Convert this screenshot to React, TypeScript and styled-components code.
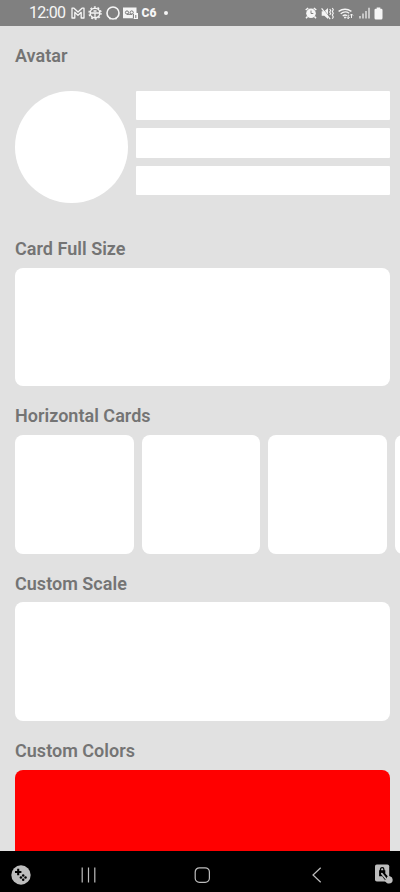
import React from 'react';
import styled, { createGlobalStyle } from 'styled-components';

const GlobalStyle = createGlobalStyle`
  * { box-sizing: border-box; }
  body { margin: 0; background: #e1e1e1; font-family: Roboto, sans-serif; }
`;

const Screen = styled.div`
  width: 400px;
  height: 892px;
  display: flex;
  flex-direction: column;
  overflow: hidden;
  background: #e1e1e1;
`;

const StatusBar = styled.header`
  flex: 0 0 26px;
  display: flex;
  align-items: center;
  justify-content: space-between;
  padding: 0 17px 0 29px;
  background: #808080;
  color: #f5f5f5;
`;

const StatusGroup = styled.div<{ $gap: number }>`
  display: flex;
  align-items: center;
  gap: ${({ $gap }) => $gap}px;
  height: 26px;
`;

const Clock = styled.span`
  width: 38px;
  font-size: 16px;
  line-height: 26px;
  letter-spacing: -0.7px;
  white-space: nowrap;
`;

const Icon = styled.svg`
  display: block;
  flex: none;
  overflow: visible;
`;

const Content = styled.main`
  flex: 1;
  min-height: 0;
  overflow: hidden;
  padding: 19px 0 0 15px;
`;

const Section = styled.section<{ $height: number }>`
  height: ${({ $height }) => $height}px;
`;

const Title = styled.h2<{ $space: number }>`
  margin: 0 0 ${({ $space }) => $space}px;
  height: 22px;
  font-size: 18px;
  font-weight: 600;
  line-height: 22px;
  letter-spacing: 0.02px;
  color: #747474;
`;

const AvatarRow = styled.div`
  display: flex;
  gap: 8px;
  width: 375.4px;
`;

const AvatarCircle = styled.div`
  width: 112.7px;
  height: 112.7px;
  border-radius: 50%;
  background: #fff;
`;

const Lines = styled.div`
  flex: 1;
  display: flex;
  flex-direction: column;
  gap: 8px;
`;

const Line = styled.div`
  height: 29.5px;
  border-radius: 1px;
  background: #fff;
`;

const Card = styled.div<{ $color?: string; $width?: number }>`
  flex: none;
  width: ${({ $width = 375.4 }) => $width}px;
  height: 118.7px;
  border-radius: 8px;
  background: ${({ $color = '#fff' }) => $color};
`;

const CardRow = styled.div`
  display: flex;
  gap: 7.9px;
  overflow: hidden;
`;

const NavBar = styled.nav`
  flex: 0 0 41px;
  display: grid;
  grid-template-columns: 67px 111px 121px 74px 27px;
  align-items: center;
  padding-top: 6px;
  background: #000;
  color: #bdbdbd;
`;

const NavItem = styled.div<{ $inset: number }>`
  padding-left: ${({ $inset }) => $inset}px;
`;

const MailIcon = () => (
  <Icon width="14" height="12" viewBox="0 0 14 12" fill="none" stroke="currentColor" strokeWidth="1.3" strokeLinejoin="round">
    <path d="M1 11V1.2h2L7 5l4-3.8h2V11h-2.8V5.3L7 8.4 3.8 5.3V11Z" />
  </Icon>
);

const GearIcon = () => (
  <Icon width="14" height="14" viewBox="0 0 14 14" fill="none" stroke="currentColor">
    <circle cx="7" cy="7" r="4.8" strokeWidth="1.4" />
    <circle cx="7" cy="7" r="6" strokeWidth="1.4" strokeDasharray="1.9 1.87" />
    <path d="M2.5 7h9M7 7v4.5M5.5 5h3" strokeWidth="1.3" />
  </Icon>
);

const RingIcon = () => (
  <Icon width="14" height="14" viewBox="0 0 14 14" fill="none" stroke="currentColor">
    <circle cx="7" cy="7" r="6" strokeWidth="1.6" />
    <path d="M4.2 13.4 3.4 11M9.8 13.4l.8-2.4" strokeWidth="1.4" />
  </Icon>
);

const VoicemailIcon = () => (
  <Icon width="15" height="12" viewBox="0 0 15 12">
    <path d="M0 .5h13.5V6H15v6h-4.3v-.8H0Z" fill="currentColor" />
    <g fill="none" stroke="#777" strokeWidth="1">
      <circle cx="4" cy="5.5" r="1.6" />
      <circle cx="8.7" cy="5.5" r="1.6" />
      <path d="M4 7.3h5M10.4 11.3V7M12.8 8v3" />
    </g>
  </Icon>
);

const CarrierMark = styled.span`
  width: 16px;
  font-size: 12px;
  font-weight: 900;
  line-height: 26px;
  letter-spacing: 0;
`;

const Dot = styled.span`
  width: 4px;
  height: 4px;
  margin-left: 3px;
  border-radius: 50%;
  background: currentColor;
`;

const AlarmIcon = () => (
  <Icon width="12" height="12" viewBox="0 0 12 12">
    <path d="m.7 3 2.5-2M11.3 3 8.8 1M2.5 9.5 1 11.3M9.5 9.5l1.5 1.8" stroke="currentColor" strokeWidth="1.5" />
    <circle cx="6" cy="6.3" r="4.8" fill="currentColor" />
    <path d="M6 3.5v3h2.3" fill="none" stroke="#808080" strokeWidth="1" />
  </Icon>
);

const MuteIcon = () => (
  <Icon width="13" height="13" viewBox="0 0 13 13">
    <path d="M.7 4.3h2.6L7 1v11L3.3 8.8H.7Z" fill="currentColor" />
    <path d="m1.4 1 8 10.2" stroke="#808080" strokeWidth=".8" />
    <path d="m.6 1.4 8.6 10.8" stroke="currentColor" strokeWidth="1.2" />
    <path d="m8.7 2 1 1.5-1 1.5 1 1.5-1 1.5M11.3 1l1 1.7-1 1.8 1 1.8-1 1.8 1 1.8-1 1.8" fill="none" stroke="currentColor" strokeWidth="1.1" />
  </Icon>
);

const WifiIcon = () => (
  <Icon width="16" height="13" viewBox="0 0 16 13" fill="none" stroke="currentColor">
    <path d="M.6 4.4Q7 .1 13.4 4.4M2.7 6.7Q7 3.4 11.2 6.3M4.7 8.9Q7 7.2 9 8.7" strokeWidth="1.3" />
    <circle cx="7" cy="10.6" r="1" fill="currentColor" stroke="none" />
    <path d="M10.2 7.7v4m-1.5-1.5 1.5 1.5 1.5-1.5M13.5 11V7m-1.5 1.5L13.5 7 15 8.5" strokeWidth="1" />
  </Icon>
);

const SignalIcon = () => (
  <Icon width="11" height="12" viewBox="0 0 11 12" stroke="currentColor" strokeWidth="1.2">
    <path d="M1 11.5V9M4 11.5v-5M7 11.5V4M10 11.5V.7" />
  </Icon>
);

const BatteryIcon = () => (
  <Icon width="9" height="13" viewBox="0 0 9 13" fill="currentColor">
    <path d="M2.7.5h3.6v1.2h.8Q8.5 1.7 8.5 3v8q0 1.5-1.4 1.5H1.9Q.5 12.5.5 11V3q0-1.3 1.4-1.3h.8Z" />
  </Icon>
);

const GameIcon = () => (
  <Icon width="20" height="20" viewBox="0 0 20 20">
    <circle cx="10" cy="10" r="9.7" fill="currentColor" />
    <path d="M7.2 3.8v6.4M4 7h6.4" stroke="#000" strokeWidth="2.1" />
    <g fill="#000">
      <circle cx="12.2" cy="10.4" r="1.25" />
      <circle cx="12.2" cy="14.8" r="1.25" />
      <circle cx="9.9" cy="12.6" r="1.25" />
      <circle cx="14.5" cy="12.6" r="1.25" />
    </g>
  </Icon>
);

const RecentsIcon = () => (
  <Icon width="15" height="16" viewBox="0 0 15 16" stroke="currentColor" strokeWidth="1.2">
    <path d="M1.2 .5v15M7.5 .5v15M13.8 .5v15" />
  </Icon>
);

const HomeIcon = () => (
  <Icon width="16" height="16" viewBox="0 0 16 16" fill="none" stroke="currentColor" strokeWidth="1.2">
    <rect x="1.2" y=".8" width="14.2" height="14.6" rx="4.2" />
  </Icon>
);

const BackIcon = () => (
  <Icon width="10" height="16" viewBox="0 0 10 16" fill="none" stroke="currentColor" strokeWidth="1.2">
    <path d="M8.7.7 1 8l7.7 7.3" />
  </Icon>
);

const TouchLockIcon = () => (
  <Icon width="20" height="20" viewBox="0 0 20 20">
    <rect x="1" y="-.5" width="14.2" height="17" rx="1.8" fill="currentColor" />
    <path d="M6.5 6V4.5q0-1.8 1.7-1.8t1.7 1.8V6" fill="none" stroke="#000" strokeWidth="1.3" />
    <path d="M5.1 5.3h6.2v3.3l3.1 3.4-3.4 3.5-2.7-4.3H5.1Z" fill="#000" />
    <path d="m7.8 8.6 4.4 5.4" stroke="currentColor" strokeWidth="1.7" strokeLinecap="round" />
    <path d="M9.6 14.4 12.6 15l.4-3q1.2-1.3 3-.7 2.7 1 2.7 3.4 0 3.7-3.8 3.9-2.2 0-5.3-4.2Z" fill="currentColor" />
  </Icon>
);

export default function App() {
  return (
    <Screen>
      <GlobalStyle />
      <StatusBar>
        <StatusGroup $gap={3.5}>
          <Clock>12:00</Clock>
          <MailIcon />
          <GearIcon />
          <RingIcon />
          <VoicemailIcon />
          <CarrierMark>C6</CarrierMark>
          <Dot />
        </StatusGroup>
        <StatusGroup $gap={4.3}>
          <AlarmIcon />
          <MuteIcon />
          <WifiIcon />
          <SignalIcon />
          <BatteryIcon />
        </StatusGroup>
      </StatusBar>
      <Content>
        <Section $height={193.1}>
          <Title $space={23.8}>Avatar</Title>
          <AvatarRow>
            <AvatarCircle />
            <Lines>
              <Line />
              <Line />
              <Line />
            </Lines>
          </AvatarRow>
        </Section>
        <Section $height={167.3}>
          <Title $space={7.7}>Card Full Size</Title>
          <Card />
        </Section>
        <Section $height={167.3}>
          <Title $space={7.7}>Horizontal Cards</Title>
          <CardRow>
            <Card $width={118.7} />
            <Card $width={118.7} />
            <Card $width={118.7} />
            <Card $width={118.7} />
          </CardRow>
        </Section>
        <Section $height={167.3}>
          <Title $space={7.7}>Custom Scale</Title>
          <Card />
        </Section>
        <Section $height={167.3}>
          <Title $space={7.7}>Custom Colors</Title>
          <Card $color="#ff0000" />
        </Section>
      </Content>
      <NavBar>
        <NavItem $inset={11}><GameIcon /></NavItem>
        <NavItem $inset={14}><RecentsIcon /></NavItem>
        <NavItem $inset={16}><HomeIcon /></NavItem>
        <NavItem $inset={13}><BackIcon /></NavItem>
        <NavItem $inset={1}><TouchLockIcon /></NavItem>
      </NavBar>
    </Screen>
  );
}
